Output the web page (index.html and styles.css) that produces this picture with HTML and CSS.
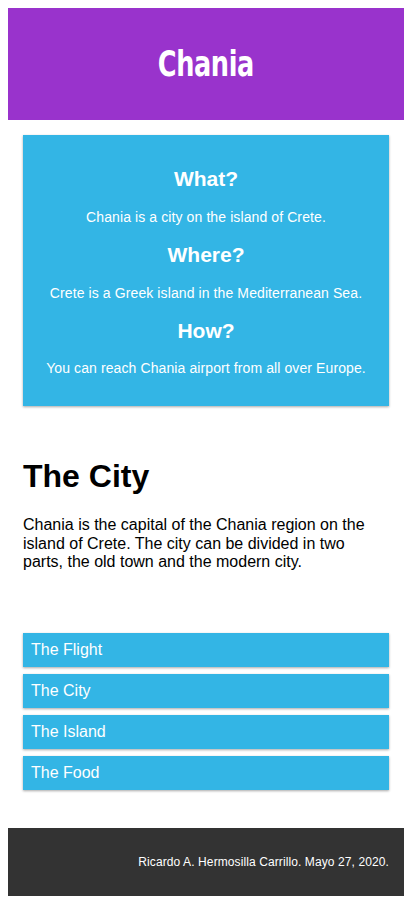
FILE: index.html
```html
<!DOCTYPE html>
<html lang="en">
<head>
<meta charset="utf-8">
<meta name="viewport" content="width=device-width, initial-scale=1">
<title>Chania</title>
<link rel="stylesheet" href="styles.css">
</head>
<body>
<div class="header">
  <h1><span class="logo">Chania</span></h1>
</div>
<div class="row">
  <div class="col">
    <div class="aside">
      <h2>What?</h2>
      <p>Chania is a city on the island of Crete.</p>
      <h2>Where?</h2>
      <p>Crete is a Greek island in the Mediterranean Sea.</p>
      <h2>How?</h2>
      <p>You can reach Chania airport from all over Europe.</p>
    </div>
  </div>
  <div class="col">
    <h1 class="title">The City</h1>
    <p class="text">Chania is the capital of the Chania region on the island of Crete. The city can be divided in two parts, the old town and the modern city.</p>
  </div>
  <div class="col">
    <ul class="menu">
      <li>The Flight</li>
      <li>The City</li>
      <li>The Island</li>
      <li>The Food</li>
    </ul>
  </div>
</div>
<div class="footer">
  <p>Ricardo A. Hermosilla Carrillo. Mayo 27, 2020.</p>
</div>
</body>
</html>
```

FILE: styles.css
```css
* { box-sizing: border-box; }

body {
  margin: 8px;
  font-family: "Liberation Sans", Arial, sans-serif;
  color: #000;
  background: #fff;
}

.header {
  background-color: #9933cc;
  color: #ffffff;
  padding: 15px;
  text-align: center;
}

.header h1 {
  margin: 21.44px 0;
  font-size: 32px;
  line-height: 39px;
  height: 39px;
}

.logo {
  display: inline-block;
  vertical-align: top;
  font-family: Impact, "DejaVu Sans Condensed", "DejaVu Sans", sans-serif;
  font-weight: bold;
  font-size: 36px;
  line-height: 39px;
  letter-spacing: -0.5px;
  transform: scaleX(0.79);
}

.row {
  display: flex;
  flex-direction: column;
}

.col {
  padding: 15px;
}

.aside {
  background-color: #33b5e5;
  padding: 15px;
  color: #ffffff;
  text-align: center;
  font-size: 14px;
  letter-spacing: 0.1px;
  box-shadow: 0 1px 3px rgba(0,0,0,0.12), 0 1px 2px rgba(0,0,0,0.24);
}

.aside h2 {
  font-size: 21px;
  margin: 17.43px 0;
  letter-spacing: 0;
}

.aside p {
  margin: 14px 0;
  line-height: 17px;
}

.title {
  font-size: 32px;
  margin: 21.44px 0;
}

.text {
  font-size: 16px;
  line-height: 18.4px;
  margin: 16px 0;
}

.menu {
  list-style-type: none;
  margin: 15px 0 23px;
  padding: 0;
}

.menu li {
  padding: 8px;
  margin-bottom: 7px;
  background-color: #33b5e5;
  color: #ffffff;
  font-size: 16px;
  box-shadow: 0 1px 3px rgba(0,0,0,0.12), 0 1px 2px rgba(0,0,0,0.24);
}

.menu li:last-child {
  margin-bottom: 0;
}

.footer {
  background-color: #333333;
  color: #ffffff;
  text-align: right;
  font-size: 12px;
  letter-spacing: 0.1px;
  padding: 15px;
}

.footer p {
  margin: 12px 0;
}
```
